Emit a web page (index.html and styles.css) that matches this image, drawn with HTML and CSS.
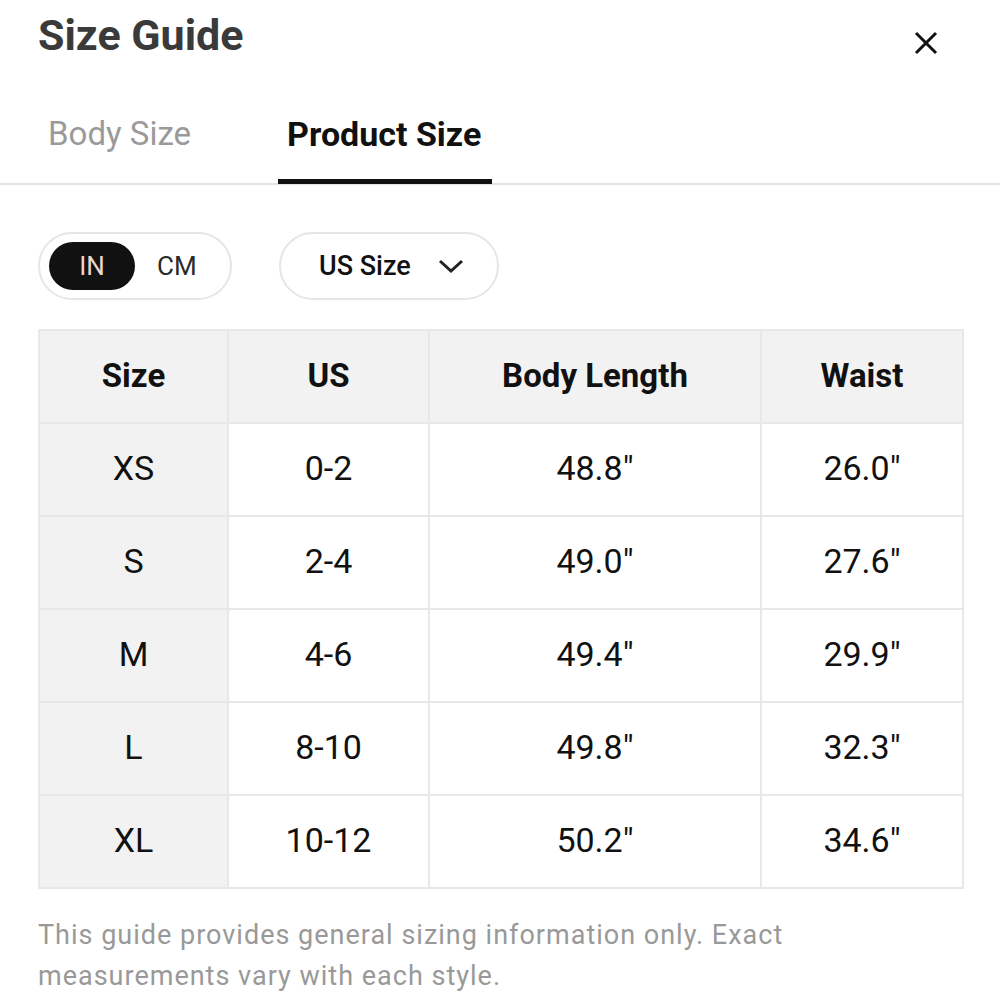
FILE: index.html
```html
<!DOCTYPE html>
<html lang="en">
<head>
<meta charset="UTF-8">
<meta name="viewport" content="width=device-width, initial-scale=1.0">
<title>Size Guide</title>
<link rel="stylesheet" href="styles.css">
</head>
<body>

<div class="sheet">
  <div class="sheet-head">
    <h1 class="title">Size Guide</h1>
    <span class="close">
      <svg width="26" height="26" viewBox="0 0 26 26"><path d="M3 3 L23 23 M23 3 L3 23" stroke="#111" stroke-width="3" fill="none"/></svg>
    </span>
  </div>

  <div class="tabs">
    <div class="tab">Body Size</div>
    <div class="tab active">Product Size</div>
  </div>

  <div class="controls">
    <div class="unit-toggle">
      <span class="unit on">IN</span>
      <span class="unit">CM</span>
    </div>
    <div class="size-select">
      US Size
      <svg width="26" height="16" viewBox="0 0 26 16"><path d="M2 3 L13 13 L24 3" stroke="#222" stroke-width="3" fill="none"/></svg>
    </div>
  </div>

  <table class="size-table">
    <thead>
      <tr><th>Size</th><th>US</th><th>Body Length</th><th>Waist</th></tr>
    </thead>
    <tbody>
      <tr><td>XS</td><td>0-2</td><td>48.8"</td><td>26.0"</td></tr>
      <tr><td>S</td><td>2-4</td><td>49.0"</td><td>27.6"</td></tr>
      <tr><td>M</td><td>4-6</td><td>49.4"</td><td>29.9"</td></tr>
      <tr><td>L</td><td>8-10</td><td>49.8"</td><td>32.3"</td></tr>
      <tr><td>XL</td><td>10-12</td><td>50.2"</td><td>34.6"</td></tr>
    </tbody>
  </table>

  <p class="note">This guide provides general sizing information only. Exact measurements vary with each style.</p>
</div>

</body>
</html>
```

FILE: styles.css
```css
body {
  margin: 0;
  background: #fff;
  font-family: Roboto, "Liberation Sans", sans-serif;
  color: #111;
}

.sheet {
  width: 1000px;
  height: 1000px;
  overflow: hidden;
}

.sheet-head {
  display: flex;
  justify-content: space-between;
  align-items: flex-start;
  padding: 0 61px 0 38px;
}

.title {
  margin: 9px 0 0;
  font-size: 43px;
  font-weight: 700;
  color: #3a3a3a;
  line-height: 52px;
}

.close {
  margin-top: 30px;
  display: flex;
}

.tabs {
  display: flex;
  gap: 77px;
  padding-left: 38px;
  margin-top: 49px;
  border-bottom: 2px solid #e2e2e2;
  height: 73px;
}

.tab {
  font-size: 33px;
  color: #9a9a9a;
  padding: 0 10px;
  height: 73px;
  box-sizing: border-box;
  line-height: 48px;
}

.tab.active {
  color: #111;
  font-size: 34px;
  font-weight: 700;
  border-bottom: 5px solid #111;
  height: 74px;
  padding: 0 11px 0 9px;
}

.controls {
  display: flex;
  gap: 47px;
  padding-left: 38px;
  margin-top: 47px;
}

.unit-toggle {
  display: flex;
  align-items: center;
  width: 194px;
  height: 68px;
  box-sizing: border-box;
  border: 2px solid #e6e6e6;
  border-radius: 34px;
  padding: 0 9px;
  gap: 22px;
}

.unit {
  font-size: 26px;
  color: #2a2a2a;
}

.unit.on {
  background: #111;
  color: #ecd6cb;
  width: 86px;
  height: 48px;
  border-radius: 24px;
  display: flex;
  align-items: center;
  justify-content: center;
}

.size-select {
  display: flex;
  align-items: center;
  gap: 27px;
  width: 220px;
  height: 68px;
  box-sizing: border-box;
  border: 2px solid #e6e6e6;
  border-radius: 34px;
  padding-left: 38px;
  font-size: 27px;
  font-weight: 500;
  color: #111;
}

.size-table {
  margin: 29px 0 0 38px;
  width: 924px;
  border-collapse: collapse;
  table-layout: fixed;
}

.size-table th,
.size-table td {
  border: 2px solid #e8e8e5;
  height: 93px;
  padding: 0 0 3px;
  text-align: center;
  font-size: 33px;
  box-sizing: border-box;
}

.size-table th {
  background: #f2f2f2;
  font-weight: 700;
  color: #111;
}

.size-table td {
  font-weight: 400;
  font-size: 34px;
  color: #111;
}

.size-table td:first-child {
  background: #f2f2f2;
}

.size-table th:nth-child(1) { width: 189px; }
.size-table th:nth-child(2) { width: 201px; }
.size-table th:nth-child(3) { width: 332px; }
.size-table th:nth-child(4) { width: 202px; }

.note {
  margin: 26px 0 0 38px;
  width: 800px;
  font-size: 27px;
  line-height: 41px;
  color: #999;
  letter-spacing: 1px;
}
```
